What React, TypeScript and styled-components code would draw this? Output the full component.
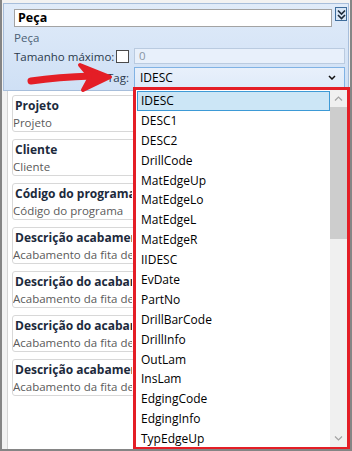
import React from "react";
import styled, { createGlobalStyle } from "styled-components";

const Global = createGlobalStyle`
  html, body { margin: 0; padding: 0; background: #f0f0f0; }
  * { box-sizing: border-box; }
  body { font-family: "Open Sans", "Noto Sans", sans-serif; }
`;

const FONT = `"Open Sans", "Noto Sans", sans-serif`;

const Window = styled.div`
  position: relative;
  width: 352px;
  height: 451px;
  overflow: hidden;
  background: #f2f2f2;
  border-left: 2px solid #858585;
  border-right: 2px solid #858585;
  border-bottom: 2px solid #858585;
  padding: 3px 1px 0 1px;
  display: flex;
  flex-direction: column;
  font-family: ${FONT};
`;

const Header = styled.div`
  height: 88px;
  border: 1px solid #a7bedb;
  background: linear-gradient(#e0ebf9, #cfe0f5);
  padding: 5px 3px 3px 10px;
  display: flex;
  flex-direction: column;
`;

const TitleRow = styled.div`
  display: flex;
  align-items: flex-start;
  gap: 3px;
  margin-right: -2px;
`;

const TitleBox = styled.div`
  flex: 1;
  height: 18px;
  background: #fff;
  border: 1px solid #a3a3a3;
  padding-left: 3px;
  font-size: 12.5px;
  font-weight: 700;
  line-height: 16px;
  color: #000;
`;

const ExpandButton = styled.div`
  width: 12px;
  height: 14px;
  margin-top: -2px;
  border: 1px solid #3f6d9c;
  background: #d8e6f6;
  display: flex;
  align-items: center;
  justify-content: center;
`;

const SubLabel = styled.div`
  height: 17px;
  margin-top: 2px;
  font-size: 11.5px;
  line-height: 17px;
  color: #4c5f74;
`;

const FormGrid = styled.div`
  display: grid;
  grid-template-columns: 116px 1fr;
  column-gap: 4px;
  row-gap: 3px;
  margin-top: 2px;
`;

const LabelCell = styled.div<{ $right?: boolean }>`
  display: flex;
  align-items: center;
  justify-content: ${(p) => (p.$right ? "flex-end" : "space-between")};
  font-size: 11.5px;
  color: #2b3a4c;
  padding-right: 1px;
`;

const Check = styled.div`
  width: 13px;
  height: 13px;
  background: #fff;
  border: 1px solid #4a4a4a;
`;

const DisabledInput = styled.div`
  height: 16px;
  border: 1px solid #bacbe0;
  background: #e8f0fb;
  padding-left: 4px;
  font-size: 11.5px;
  line-height: 14px;
  color: #8a96a4;
`;

const SelectBox = styled.div`
  height: 21px;
  border: 1px solid #80b2e4;
  background: linear-gradient(#e8f0fb, #e0ebf9);
  padding: 0 8px 0 5px;
  display: flex;
  align-items: center;
  justify-content: space-between;
  font-size: 12px;
  color: #000;
`;

const Body = styled.div`
  flex: 1;
  margin-left: 4px;
  margin-right: 0;
  border-left: 1px solid #d4d4d4;
  background: #fff;
  padding: 4px 0 0 4px;
  display: flex;
  flex-direction: column;
  gap: 7px;
`;

const Card = styled.div`
  height: 37px;
  border: 1px solid #d8d8d8;
  border-radius: 3px;
  padding-top: 1px;
  overflow: hidden;
  white-space: nowrap;
`;

const CardTitle = styled.div`
  height: 18px;
  max-width: 119px;
  overflow: hidden;
  line-height: 18px;
  padding-left: 2px;
  font-size: 12px;
  font-weight: 700;
  color: #1c2a3c;
`;

const CardValue = styled.div`
  height: 16px;
  max-width: 119px;
  overflow: hidden;
  line-height: 16px;
  font-size: 11.5px;
  color: #5a5a5a;
`;

const Dropdown = styled.div`
  position: absolute;
  left: 131px;
  top: 87px;
  width: 217px;
  height: 363px;
  border: 3px solid #e41e26;
  background: #fff;
  padding: 1px 0 0 1px;
  display: flex;
`;

const List = styled.div`
  flex: 1;
  display: flex;
  flex-direction: column;
  overflow: hidden;
`;

const Item = styled.div<{ $active?: boolean }>`
  height: 19.9px;
  flex: none;
  line-height: 18px;
  padding-left: 3px;
  font-size: 12px;
  color: #000;
  border: 1px solid ${(p) => (p.$active ? "#3d9ad6" : "transparent")};
  background: ${(p) => (p.$active ? "#cce6f6" : "transparent")};
`;

const Scrollbar = styled.div`
  width: 17px;
  background: #f0f0f0;
  display: flex;
  flex-direction: column;
  align-items: center;
  margin-top: -1px;
`;

const ScrollArrow = styled.div`
  height: 17px;
  width: 17px;
  display: flex;
  align-items: center;
  justify-content: center;
  flex: none;
`;

const Thumb = styled.div`
  width: 17px;
  height: 132px;
  background: #cdcdcd;
  flex: none;
`;

const Spacer = styled.div`
  flex: 1;
`;

const ArrowOverlay = styled.svg`
  position: absolute;
  left: 0;
  top: 0;
  pointer-events: none;
`;

const cards = [
  ["Projeto", "Projeto"],
  ["Cliente", "Cliente"],
  ["Código do programa", "Código do programa"],
  ["Descrição acabamento", "Acabamento da fita de borda"],
  ["Descrição do acabamento", "Acabamento da fita de borda"],
  ["Descrição do acabamento", "Acabamento da fita de borda"],
  ["Descrição acabamento", "Acabamento da fita de borda"],
];

const items = [
  "IDESC",
  "DESC1",
  "DESC2",
  "DrillCode",
  "MatEdgeUp",
  "MatEdgeLo",
  "MatEdgeL",
  "MatEdgeR",
  "IIDESC",
  "EvDate",
  "PartNo",
  "DrillBarCode",
  "DrillInfo",
  "OutLam",
  "InsLam",
  "EdgingCode",
  "EdgingInfo",
  "TypEdgeUp",
];

export default function App() {
  return (
    <>
      <Global />
      <Window>
        <Header>
          <TitleRow>
            <TitleBox>Peça</TitleBox>
            <ExpandButton>
              <svg width="9" height="11" viewBox="0 0 9 11">
                <path d="M1 1.5 L4.5 5 L8 1.5 M1 6 L4.5 9.5 L8 6" stroke="#1d2b3a" strokeWidth="1.6" fill="none" />
              </svg>
            </ExpandButton>
          </TitleRow>
          <SubLabel>Peça</SubLabel>
          <FormGrid>
            <LabelCell>
              <span>Tamanho máximo:</span>
              <Check />
            </LabelCell>
            <DisabledInput>0</DisabledInput>
            <LabelCell $right>Tag:</LabelCell>
            <SelectBox>
              <span>IDESC</span>
              <svg width="8" height="5" viewBox="0 0 8 5">
                <path d="M1 1 L4 4 L7 1" stroke="#111" strokeWidth="1.5" fill="none" />
              </svg>
            </SelectBox>
          </FormGrid>
        </Header>
        <Body>
          {cards.map(([t, v], i) => (
            <Card key={i}>
              <CardTitle>{t}</CardTitle>
              <CardValue>{v}</CardValue>
            </Card>
          ))}
        </Body>
        <Dropdown>
          <List>
            {items.map((it, i) => (
              <Item key={it} $active={i === 0}>
                {it}
              </Item>
            ))}
          </List>
          <Scrollbar>
            <ScrollArrow>
              <svg width="9" height="5" viewBox="0 0 9 5">
                <path d="M1 4.5 L4.5 1 L8 4.5" stroke="#a3a3a3" strokeWidth="1.2" fill="none" />
              </svg>
            </ScrollArrow>
            <Thumb />
            <Spacer />
            <ScrollArrow>
              <svg width="9" height="5" viewBox="0 0 9 5">
                <path d="M1 0.5 L4.5 4 L8 0.5" stroke="#a3a3a3" strokeWidth="1.2" fill="none" />
              </svg>
            </ScrollArrow>
          </Scrollbar>
        </Dropdown>
        <ArrowOverlay width="352" height="451" viewBox="0 0 352 451">
          <path d="M29 81 Q 56 77 90 76" stroke="#e41e26" strokeWidth="7" strokeLinecap="round" fill="none" />
          <path d="M78 65 L108 77 L81 90 L88 77 Z" fill="#e41e26" stroke="#e41e26" strokeWidth="4" strokeLinejoin="round" />
        </ArrowOverlay>
      </Window>
    </>
  );
}
